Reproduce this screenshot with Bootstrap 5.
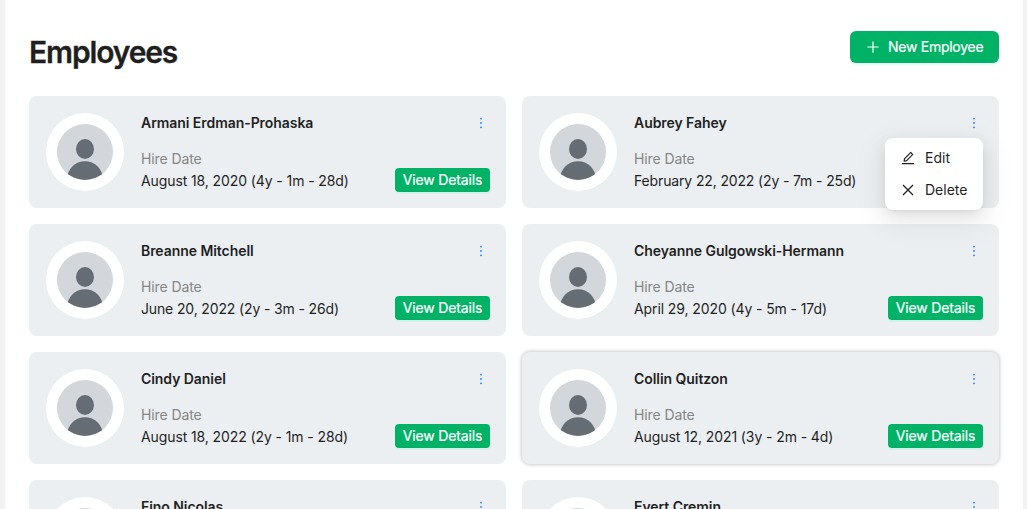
<!DOCTYPE html>
<html lang="en">
<head>
<meta charset="utf-8">
<meta name="viewport" content="width=device-width, initial-scale=1">
<title>Employees</title>
<link rel="stylesheet" href="https://cdn.jsdelivr.net/npm/bootstrap@5.3.0/dist/css/bootstrap.min.css">
<style>
  html, body { height: 100%; overflow: hidden; }
  body { background: #f2f2f2; color: #1f1f1f; font-family: Inter, sans-serif; font-size: 14px; line-height: 22px; }
  .page { margin: 0 4px 0 5px; height: 509px; padding: 31px 24px 0; overflow: hidden; }
  .page-head { height: 65px; }
  .page-title { font-size: 30px; font-weight: 600; line-height: 40px; margin-top: 1px; letter-spacing: -1.150px; -webkit-text-stroke: .3px currentColor; }
  .grid { display: grid; grid-template-columns: 1fr 1fr; gap: 16px; }
  .emp { height: 112px; padding: 16px; border-radius: 8px; background: #ebeff2; }
  .emp.hovered { box-shadow: 0 0 4px rgba(0,0,0,.3); }
  .avatar { width: 78px; height: 78px; margin: 1px 17px 0 1px; padding: 11px; }
  .avatar svg { display: block; width: 56px; height: 56px; }
  .name { font-weight: 600; margin-bottom: 14px; letter-spacing: -.060px; }
  .label { color: #858687; letter-spacing: -.1px; }
  .date { letter-spacing: -.1px; }
  .date.long { letter-spacing: -.140px; }
  .btn-green { --bs-btn-color: #fff; --bs-btn-bg: #00b265; --bs-btn-hover-bg: #00b265; --bs-btn-hover-color: #fff; --bs-btn-border-width: 0; --bs-btn-font-size: 14px; --bs-btn-line-height: 22px; box-shadow: 0 2px 0 rgba(5,255,155,.1); white-space: nowrap; -webkit-text-stroke: .2px currentColor; }
  .btn-details { width: 95px; height: 24px; --bs-btn-padding-x: 0; --bs-btn-padding-y: 1px; --bs-btn-border-radius: 4px; letter-spacing: -.150px; }
  .btn-new { width: 149px; height: 32px; --bs-btn-padding-x: 16px; --bs-btn-padding-y: 0; --bs-btn-border-radius: 6px; letter-spacing: -.270px; }
  .ico { width: 14px; height: 14px; fill: currentColor; flex: none; display: block; }
  .more { color: #1677ff; margin: 4px 2px 0 0; }
  .emp-menu { right: 16px; top: 42px; width: 98px; height: 72px; padding: 4px; border-radius: 8px; z-index: 5; box-shadow: 0 6px 16px 0 rgba(0,0,0,.08), 0 3px 6px -4px rgba(0,0,0,.12), 0 9px 28px 8px rgba(0,0,0,.05); }
  .emp-menu div { height: 32px; padding: 0 12px; gap: 10px; }
</style>
</head>
<body>
<svg class="d-none">
  <symbol id="person" viewBox="0 0 56 56">
    <rect width="56" height="56" fill="#d3d7dc"/><g fill="#666c74"><ellipse cx="28" cy="25" rx="9" ry="10"/><ellipse cx="28" cy="55.500" rx="18" ry="18.300"/></g>
  </symbol>
  <symbol id="more" viewBox="64 64 896 896"><path d="M456 231a56 56 0 10112 0 56 56 0 10-112 0zm0 280a56 56 0 10112 0 56 56 0 10-112 0zm0 280a56 56 0 10112 0 56 56 0 10-112 0z"/></symbol>
  <symbol id="plus" viewBox="64 64 896 896"><path d="M482 152h60q8 0 8 8v704q0 8-8 8h-60q-8 0-8-8V160q0-8 8-8z"/><path d="M160 474h704q8 0 8 8v60q0 8-8 8H160q-8 0-8-8v-60q0-8 8-8z"/></symbol>
  <symbol id="edit" viewBox="64 64 896 896"><path d="M257.700 752c2 0 4-.2 6-.5L431.900 722c2-.4 3.900-1.300 5.300-2.800l423.900-423.900a9.960 9.960 0 000-14.100L694.900 114.900c-1.900-1.900-4.400-2.900-7.100-2.900s-5.200 1-7.100 2.900L256.800 538.800c-1.500 1.500-2.400 3.300-2.800 5.300l-29.500 168.200a33.500 33.500 0 009.400 29.800c6.600 6.400 14.900 9.900 23.800 9.900zm67.400-174.400L687.800 215l73.300 73.300-362.700 362.600-88.900 15.700 15.600-89zM880 836H144c-17.700 0-32 14.300-32 32v36c0 4.400 3.600 8 8 8h784c4.400 0 8-3.600 8-8v-36c0-17.700-14.300-32-32-32z"/></symbol>
  <symbol id="close" viewBox="0 0 14 14"><path d="M2 2l10 10M12 2L2 12" fill="none" stroke="currentColor" stroke-width="1.250"/></symbol>
</svg>
<main class="page bg-white">
  <header class="page-head d-flex justify-content-between align-items-start">
    <h1 class="page-title mb-0">Employees</h1>
    <button class="btn btn-green btn-new d-flex align-items-center"><svg class="ico me-2"><use href="#plus"/></svg><span>New Employee</span></button>
  </header>
  <div class="grid" id="employees"></div>
</main>
<script src="https://cdn.jsdelivr.net/npm/bootstrap@5.3.0/dist/js/bootstrap.bundle.min.js"></script>
<script>
  const employees = [
    ['Armani Erdman-Prohaska', 'August 18, 2020 (4y - 1m - 28d)'],
    ['Aubrey Fahey', 'February 22, 2022 (2y - 7m - 25d)', 'menu'],
    ['Breanne Mitchell', 'June 20, 2022 (2y - 3m - 26d)'],
    ['Cheyanne Gulgowski-Hermann', 'April 29, 2020 (4y - 5m - 17d)'],
    ['Cindy Daniel', 'August 18, 2022 (2y - 1m - 28d)'],
    ['Collin Quitzon', 'August 12, 2021 (3y - 2m - 4d)', 'hovered'],
    ['Fino Nicolas', ''],
    ['Evert Cremin', '']
  ];
  const menu = `<div class="emp-menu position-absolute bg-white">
    <div class="d-flex align-items-center"><svg class="ico"><use href="#edit"/></svg><span>Edit</span></div>
    <div class="d-flex align-items-center"><svg class="ico"><use href="#close"/></svg><span>Delete</span></div></div>`;
  document.getElementById('employees').innerHTML = employees.map(([name, date, state]) => `
    <article class="emp position-relative d-flex ${state === 'hovered' ? 'hovered' : ''}">
      <div class="avatar rounded-circle bg-white flex-shrink-0"><svg class="rounded-circle"><use href="#person"/></svg></div>
      <div class="flex-grow-1 text-nowrap"><div class="name">${name}</div>
        ${date ? `<div class="label">Hire Date</div><div class="date ${/^(Feb|June)/.test(date) ? 'long' : ''}">${date}</div>` : ''}</div>
      <div class="d-flex flex-column justify-content-between align-items-end">
        <svg class="ico more"><use href="#more"/></svg>
        ${date && state !== 'menu' ? '<button class="btn btn-green btn-details">View Details</button>' : ''}</div>
      ${state === 'menu' ? menu : ''}
    </article>`).join('');
</script>
</body>
</html>
